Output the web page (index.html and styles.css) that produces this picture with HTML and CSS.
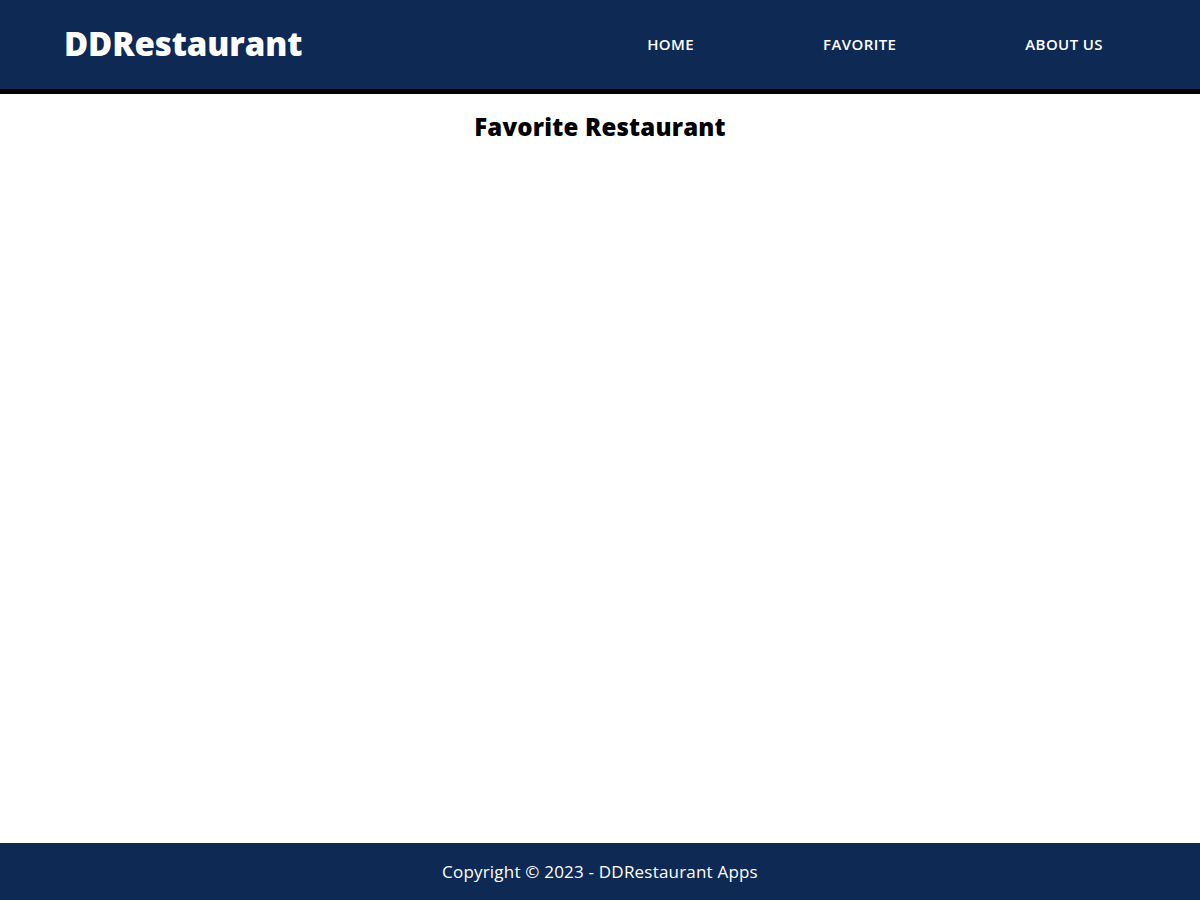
FILE: index.html
```html
<!DOCTYPE html>
<html lang="en">
<head>
<meta charset="utf-8">
<title>DDRestaurant</title>
<link rel="stylesheet" href="styles.css">
</head>
<body>
<div class="page">
  <header class="app-bar">
    <h1 class="brand">DDRestaurant</h1>
    <nav class="nav">
      <a class="nav-link" href="#">HOME</a>
      <a class="nav-link" href="#">FAVORITE</a>
      <a class="nav-link" href="#">ABOUT US</a>
    </nav>
  </header>
  <main class="content">
    <h2 class="content-title">Favorite Restaurant</h2>
  </main>
  <footer class="footer">
    <p class="footer-text">Copyright © 2023 - DDRestaurant Apps</p>
  </footer>
</div>
</body>
</html>
```

FILE: styles.css
```css
* { box-sizing: border-box; }
html, body { margin: 0; padding: 0; }
body {
  font-family: "Open Sans", "Liberation Sans", sans-serif;
  background: #ffffff;
  color: #000000;
}
.page {
  min-height: 900px;
  display: flex;
  flex-direction: column;
}
.app-bar {
  height: 94px;
  background: #0f2955;
  border-bottom: 5px solid #000000;
  display: flex;
  align-items: center;
  justify-content: space-between;
  padding: 0 97px 2px 64px;
}
.brand {
  margin: 0;
  color: #ffffff;
  font-size: 33px;
  font-weight: 800;
  letter-spacing: -0.1px;
}
.nav {
  display: flex;
  gap: 129px;
}
.nav-link {
  color: #ffffff;
  text-decoration: none;
  font-size: 15px;
  font-weight: 600;
  letter-spacing: 0.4px;
}
.content {
  flex: 1;
  padding-top: 16px;
}
.content-title {
  margin: 0;
  text-align: center;
  font-size: 24px;
  font-weight: 800;
  letter-spacing: 0.2px;
}
.footer {
  height: 57px;
  background: #0f2955;
  display: flex;
  align-items: center;
  justify-content: center;
}
.footer-text {
  margin: 0;
  color: #ffffff;
  font-size: 17px;
  font-weight: 500;
  letter-spacing: 0.2px;
}
```
